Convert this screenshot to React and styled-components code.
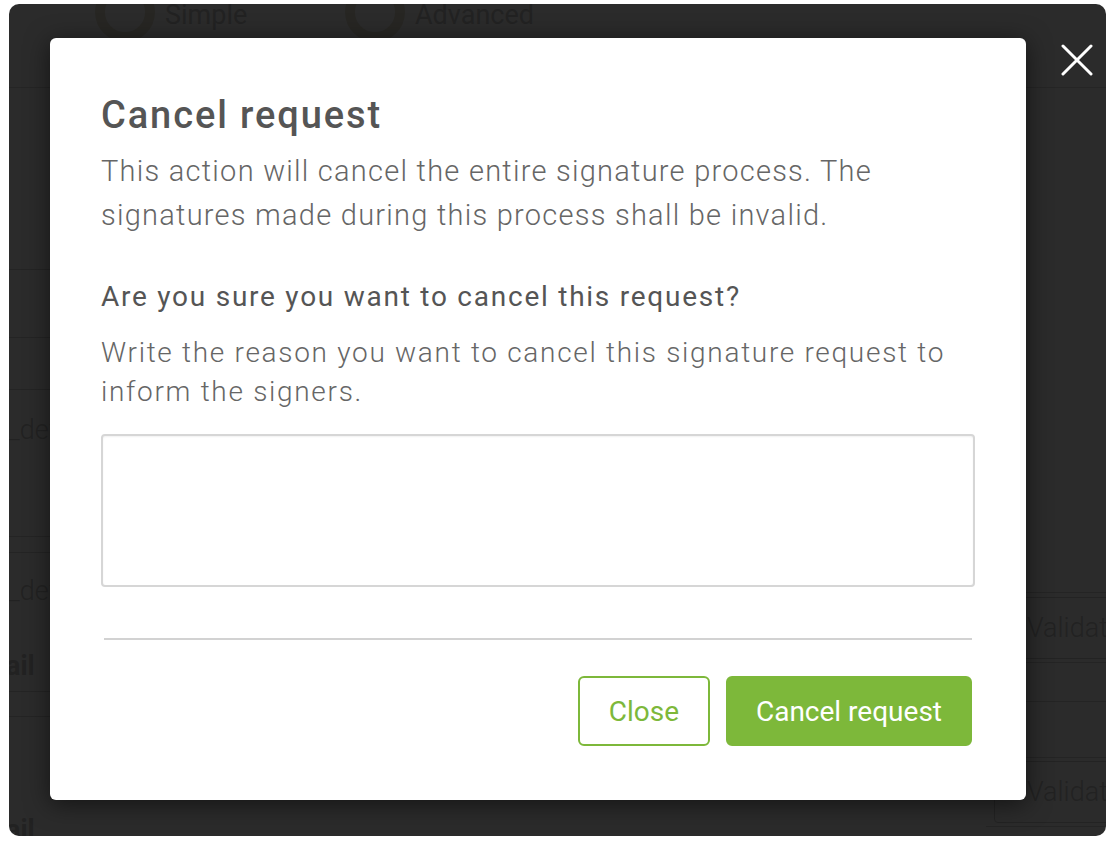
import React from "react";
import styled, { createGlobalStyle } from "styled-components";

const Global = createGlobalStyle`
  html, body { margin: 0; padding: 0; background: #ffffff; }
  body { font-family: Roboto, "Liberation Sans", sans-serif; }
  * { box-sizing: border-box; }
`;

const Frame = styled.div`
  position: relative;
  margin: 4px 8px 0 9px;
  height: 832px;
  border-radius: 10px;
  overflow: hidden;
  background: #ffffff;
`;

/* ---------- faint page beneath the overlay ---------- */
const Page = styled.div`
  display: flex;
  flex-direction: column;
  height: 100%;
  color: #c8c8c8;
  font-family: Roboto, "Liberation Sans", sans-serif;
`;

const TopBar = styled.div`
  height: 84px;
  flex: none;
  display: flex;
  align-items: flex-start;
  border-bottom: 1px solid #dcdcdc;
  overflow: hidden;
`;

const Cut = styled.span`
  font-size: 30px;
  line-height: 30px;
  margin-top: -6px;
  margin-left: -16px;
  width: 102px;
  flex: none;
`;

const Radio = styled.span`
  width: 60px;
  height: 60px;
  margin-top: -22px;
  border-radius: 50%;
  border: 10px solid #e4e1cf;
  background: #ffffff;
  flex: none;
`;

const RadioLabel = styled.span`
  font-size: 27px;
  line-height: 30px;
  margin-top: -4px;
  margin-left: 10px;
  width: ${(p) => p.$w}px;
  flex: none;
`;

const Body = styled.div`
  flex: 1;
  display: flex;
  justify-content: space-between;
`;

const Column = styled.div`
  display: flex;
  flex-direction: column;
  width: ${(p) => p.$w}px;
  overflow: hidden;
`;

const Row = styled.div`
  height: ${(p) => p.$h}px;
  flex: none;
  border-bottom: 1px solid #d4d4d4;
  display: flex;
  align-items: center;
  font-size: 27px;
  font-weight: 300;
  white-space: nowrap;
`;

const Cell = styled.div`
  height: ${(p) => p.$h}px;
  flex: none;
  border-bottom: 1px solid #d4d4d4;
  display: flex;
  flex-direction: column;
  padding-top: ${(p) => p.$pt}px;
  gap: ${(p) => p.$gap || 0}px;
  font-size: 27px;
  line-height: 32px;
  white-space: nowrap;
`;

const CutText = styled.span`
  margin-left: ${(p) => p.$shift}px;
  font-weight: ${(p) => (p.$bold ? 700 : 300)};
`;

const Validate = styled.span`
  margin-left: 8px;
  padding: 14px 32px;
  border: 1px solid #d0d0d0;
  border-radius: 4px;
  font-weight: 300;
`;

/* ---------- overlay & modal ---------- */
const Overlay = styled.div`
  position: absolute;
  inset: 0;
  background: rgba(0, 0, 0, 0.83);
  padding: 34px 0 0 41px;
  display: flex;
  align-items: flex-start;
`;

const CloseX = styled.button`
  position: absolute;
  left: 1051px;
  top: 39px;
  width: 34px;
  height: 34px;
  padding: 0;
  border: 0;
  background: transparent;
  cursor: pointer;
  display: flex;
  align-items: center;
  justify-content: center;
`;

const Modal = styled.div`
  width: 976px;
  height: 762px;
  background: #ffffff;
  border-radius: 6px;
  box-shadow: 0 4px 24px rgba(0, 0, 0, 0.55);
  padding: 55px 51px 54px 51px;
  display: flex;
  flex-direction: column;
`;

const Title = styled.h2`
  margin: 0;
  font-size: 38px;
  line-height: 44px;
  font-weight: 500;
  letter-spacing: 1.9px;
  color: #555555;
`;

const Lead = styled.p`
  margin: 12px 0 0;
  font-size: 29px;
  line-height: 44px;
  font-weight: 300;
  letter-spacing: 1.25px;
  color: #666666;
`;

const Question = styled.h3`
  margin: 42px 0 0;
  font-size: 28px;
  line-height: 36px;
  font-weight: 400;
  letter-spacing: 1.75px;
  color: #555555;
`;

const Hint = styled.p`
  margin: 18px 0 0;
  font-size: 28px;
  line-height: 39px;
  font-weight: 300;
  letter-spacing: 1.7px;
  color: #666666;
`;

const Reason = styled.textarea`
  margin-top: 23px;
  width: 100%;
  height: 153px;
  flex: none;
  resize: none;
  border: 2px solid #d6d6d6;
  border-radius: 4px;
  box-shadow: inset 0 1px 2px rgba(0, 0, 0, 0.06);
  font-family: Roboto, "Liberation Sans", sans-serif;
  font-size: 24px;
  padding: 10px 14px;
  outline: none;
`;

const Divider = styled.hr`
  margin: 51px 3px 0;
  border: 0;
  height: 2px;
  background: #d2d2d2;
`;

const Footer = styled.div`
  margin: 36px 3px 0;
  display: flex;
  justify-content: flex-end;
  gap: 16px;
`;

const Button = styled.button`
  height: 70px;
  padding: 0 28px;
  border-radius: 6px;
  border: 2px solid #7db83a;
  background: ${(p) => (p.$primary ? "#7db83a" : "#ffffff")};
  color: ${(p) => (p.$primary ? "#ffffff" : "#7db83a")};
  font-family: Roboto, "Liberation Sans", sans-serif;
  font-size: 28px;
  font-weight: 400;
  min-width: ${(p) => p.$min || 0}px;
  cursor: pointer;
`;

export default function App() {
  return (
    <>
      <Global />
      <Frame>
        <Page>
          <TopBar>
            <Cut>d</Cut>
            <Radio />
            <RadioLabel $w={180}>Simple</RadioLabel>
            <Radio />
            <RadioLabel $w={200}>Advanced</RadioLabel>
          </TopBar>
          <Body>
            <Column $w={60}>
              <Cell $h={182} />
              <Cell $h={68} />
              <Cell $h={52} />
              <Cell $h={147} $pt={24}>
                <CutText $shift={-21}>le_default</CutText>
              </Cell>
              <Cell $h={16} />
              <Cell $h={139} $pt={22} $gap={43}>
                <CutText $shift={-21}>le_default</CutText>
                <CutText $shift={-41} $bold>
                  email
                </CutText>
              </Cell>
              <Cell $h={25} />
              <Cell $h={130} $pt={97}>
                <CutText $shift={-41} $bold>
                  email
                </CutText>
              </Cell>
            </Column>
            <Column $w={120}>
              <Row $h={505} />
              <Row $h={70}>
                <Validate>Validate</Validate>
              </Row>
              <Row $h={39} />
              <Row $h={56} />
              <Row $h={69}>
                <Validate>Validate</Validate>
              </Row>
            </Column>
          </Body>
        </Page>
        <Overlay>
          <Modal role="dialog" aria-labelledby="cancel-title">
            <Title id="cancel-title">Cancel request</Title>
            <Lead>
              This action will cancel the entire signature process. The
              signatures made during this process shall be invalid.
            </Lead>
            <Question>Are you sure you want to cancel this request?</Question>
            <Hint>
              Write the reason you want to cancel this signature request to
              inform the signers.
            </Hint>
            <Reason aria-label="Reason" />
            <Divider />
            <Footer>
              <Button $min={132}>Close</Button>
              <Button $primary $min={246}>Cancel request</Button>
            </Footer>
          </Modal>
          <CloseX aria-label="Close">
            <svg width="32" height="32" viewBox="0 0 32 32">
              <path
                d="M2 2 L30 30 M30 2 L2 30"
                stroke="#ffffff"
                strokeWidth="3"
                strokeLinecap="round"
              />
            </svg>
          </CloseX>
        </Overlay>
      </Frame>
    </>
  );
}
